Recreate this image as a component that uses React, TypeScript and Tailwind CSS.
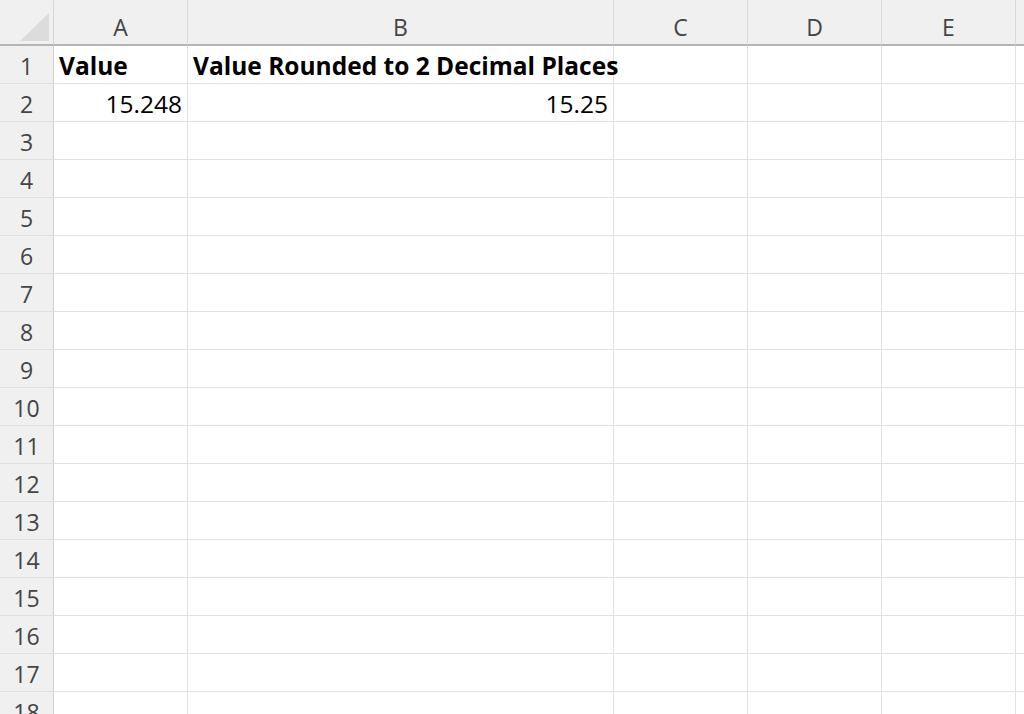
import React from "react";

const columns = ["A", "B", "C", "D", "E", ""];
const rowCount = 18;

const cells: Record<string, { text: string; bold?: boolean; right?: boolean }> = {
  "1-0": { text: "Value", bold: true },
  "1-1": { text: "Value Rounded to 2 Decimal Places", bold: true },
  "2-0": { text: "15.248", right: true },
  "2-1": { text: "15.25", right: true },
};

export default function App() {
  const rows = Array.from({ length: rowCount }, (_, i) => i + 1);

  return (
    <div
      className="h-[714px] w-[1024px] overflow-hidden bg-white text-[#222]"
      style={{ fontFamily: '"Open Sans", "Noto Sans", sans-serif' }}
    >
      <div className="grid grid-cols-[54px_134px_426px_134px_134px_134px_1fr] grid-rows-[46px_repeat(18,38px)]">
        {/* Corner */}
        <div className="relative border-r border-b-2 border-r-[#d6d6d6] border-b-[#b5b5b5] bg-[#f0f0f0]">
          <svg className="absolute right-[4px] bottom-[3px]" width="29" height="28" viewBox="0 0 29 28">
            <polygon points="29,0 29,28 0,28" fill="#dcdcdc" />
          </svg>
        </div>

        {/* Column headers */}
        {columns.map((c, i) => (
          <div
            key={`h-${i}`}
            className="flex items-center justify-center border-r border-b-2 border-r-[#dadada] border-b-[#b5b5b5] bg-[#f0f0f0] pt-[11px] text-[23px] text-[#444]"
          >
            {c}
          </div>
        ))}

        {rows.map((r) => (
          <React.Fragment key={r}>
            <div className="flex items-center justify-center border-r border-b border-r-[#d0d0d0] border-b-[#e0e0e0] bg-[#f0f0f0] pt-[3px] text-[23px] text-[#444]">
              {r}
            </div>
            {columns.map((_, ci) => {
              const cell = cells[`${r}-${ci}`];
              return (
                <div
                  key={ci}
                  className={`flex items-center overflow-visible whitespace-nowrap border-r border-b border-[#e1e1e1] px-[5px] pt-[3px] text-[24.5px] text-black ${
                    cell?.right ? "justify-end" : "justify-start"
                  } ${cell?.bold ? "font-bold" : "font-normal"}`}
                >
                  {cell?.text}
                </div>
              );
            })}
          </React.Fragment>
        ))}
      </div>
    </div>
  );
}
